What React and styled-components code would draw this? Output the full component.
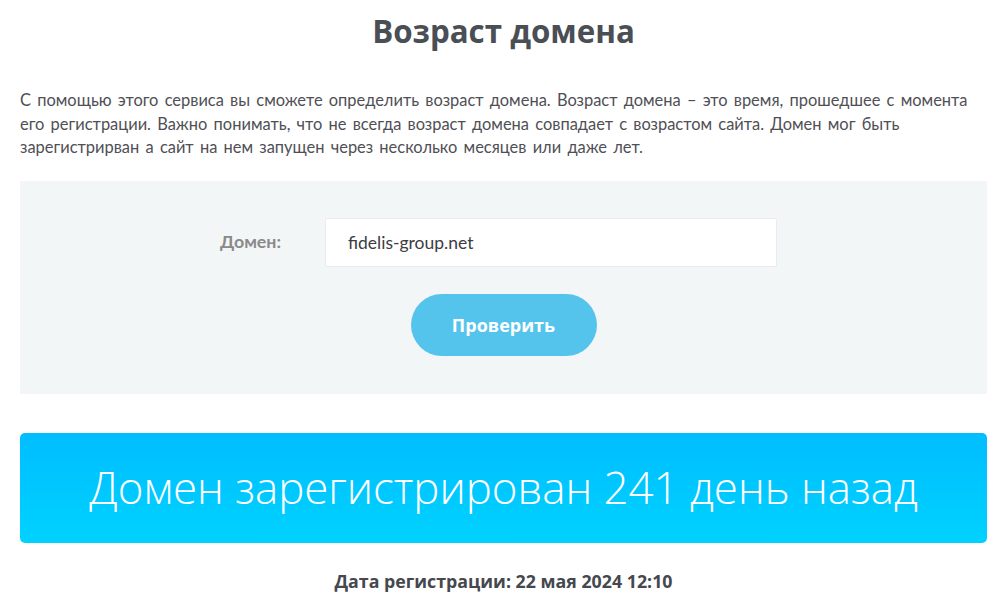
import React from "react";
import styled, { createGlobalStyle } from "styled-components";

const Global = createGlobalStyle`
  html, body { margin: 0; padding: 0; background: #fff; }
  body { font-family: "Open Sans", "Noto Sans", sans-serif; }
  * { box-sizing: border-box; }
`;

const Page = styled.div`
  width: 1007px;
  padding: 0 20px;
`;

const Title = styled.h1`
  margin: 0;
  padding-top: 11px;
  height: 61px;
  text-align: center;
  font-family: "Open Sans", sans-serif;
  font-weight: 700;
  font-size: 31.3px;
  line-height: 40px;
  color: #4a4e55;
`;

const Intro = styled.p`
  margin: 28px 0 0;
  font-family: "Lato", "Noto Sans", sans-serif;
  font-size: 16.45px;
  line-height: 23.5px;
  word-spacing: 2px;
  color: #4f4f55;
`;

const Panel = styled.div`
  margin-top: 21px;
  height: 213px;
  background: #f3f6f7;
  display: flex;
  flex-direction: column;
  align-items: center;
  padding-top: 37px;
`;

const Row = styled.div`
  display: flex;
  align-items: center;
  margin-left: -10px;
`;

const Label = styled.label`
  width: 105px;
  font-family: "Lato", sans-serif;
  font-weight: 700;
  font-size: 17.8px;
  color: #8a8a8a;
  padding-bottom: 2px;
`;

const Input = styled.div`
  width: 452px;
  height: 49px;
  background: #fff;
  border: 1px solid #e9ecee;
  border-radius: 2px;
  display: flex;
  align-items: center;
  padding-left: 22px;
  font-family: "Lato", sans-serif;
  font-size: 17.5px;
  color: #3c3c42;
`;

const Button = styled.button`
  margin-top: 27px;
  width: 186px;
  height: 62px;
  border: none;
  border-radius: 31px;
  background: #55c4ec;
  color: #fff;
  font-family: "Open Sans", sans-serif;
  font-weight: 700;
  font-size: 18px;
  cursor: pointer;
`;

const Banner = styled.div`
  margin-top: 39px;
  height: 110px;
  border-radius: 5px;
  background: linear-gradient(180deg, #00bdff 0%, #00d2ff 100%);
  display: flex;
  align-items: center;
  justify-content: center;
  color: #fff;
  font-family: "Open Sans", sans-serif;
  font-weight: 300;
  font-size: 43.8px;
  padding-bottom: 2px;
`;

const DateLine = styled.div`
  margin-top: 26px;
  text-align: center;
  font-family: "Open Sans", sans-serif;
  font-weight: 700;
  font-size: 17.8px;
  color: #45484e;
`;

export default function App() {
  return (
    <>
      <Global />
      <Page>
        <Title>Возраст домена</Title>
        <Intro>
          С помощью этого сервиса вы сможете определить возраст домена. Возраст домена – это время, прошедшее с момента
          <br />
          его регистрации. Важно понимать, что не всегда возраст домена совпадает с возрастом сайта. Домен мог быть
          <br />
          зарегистрирван а сайт на нем запущен через несколько месяцев или даже лет.
        </Intro>
        <Panel>
          <Row>
            <Label>Домен:</Label>
            <Input>fidelis-group.net</Input>
          </Row>
          <Button>Проверить</Button>
        </Panel>
        <Banner>Домен зарегистрирован 241 день назад</Banner>
        <DateLine>Дата регистрации: 22 мая 2024 12:10</DateLine>
      </Page>
    </>
  );
}
